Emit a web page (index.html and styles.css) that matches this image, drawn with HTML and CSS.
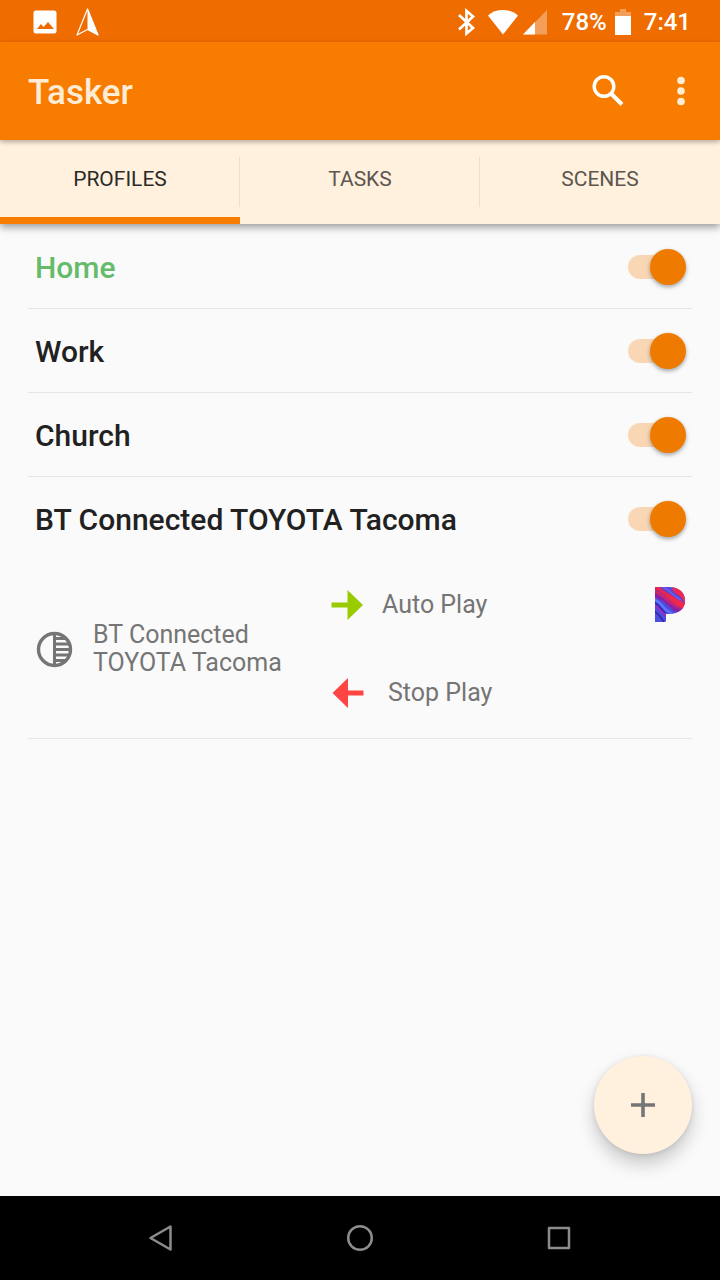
FILE: index.html
```html
<!DOCTYPE html>
<html lang="en">
<head>
<meta charset="utf-8">
<meta name="viewport" content="width=device-width, initial-scale=1">
<title>Tasker</title>
<link rel="stylesheet" href="styles.css">
</head>
<body>
<div class="screen">
  <div class="status-bar">
    <div class="status-left">
      <svg width="24" height="24" viewBox="0 0 24 24" aria-hidden="true"><path fill="#fff" fill-rule="evenodd" d="M3 .5h18a2.500 2.500 0 0 1 2.500 2.500v18a2.500 2.500 0 0 1-2.500 2.500H3A2.500 2.500 0 0 1 .5 21V3A2.500 2.500 0 0 1 3 .5zM4 19h17l-6-7-4.500 5L8 14z"/></svg>
      <svg width="24" height="30" viewBox="0 0 24 30" aria-hidden="true"><path fill="none" stroke="#fff" stroke-width="1.200" stroke-linejoin="round" d="M11.500 2L1 28L11.500 22.500L22 28z"/><path fill="#fff" d="M11.500 1v21.500l11 6z"/></svg>
    </div>
    <div class="status-right">
      <svg width="20" height="28" viewBox="0 0 20 28" aria-hidden="true"><path fill="none" stroke="#fff" stroke-width="2.700" d="M2 7l14 13-6.500 5.500V3L16 8.500 2 21.500"/></svg>
      <svg class="wifi" width="32" height="26" viewBox="0 0 32 26" aria-hidden="true"><path fill="#fff" d="M15 25.500L0 6.500C8-.8 22-.8 30 6.500z"/></svg>
      <svg class="signal" width="24" height="26" viewBox="0 0 24 26" aria-hidden="true"><path fill="#fff" fill-opacity=".35" d="M24 1v24.500H0z"/><path fill="#fff" d="M12 13v12.500H0z"/></svg>
      <span class="percent">78%</span>
      <svg class="battery" width="16" height="28" viewBox="0 0 16 28" aria-hidden="true"><path fill="#fff" fill-opacity=".35" d="M5 1h6v3h5v2H0V4h5zM0 6h16v4H0z"/><path fill="#fff" d="M0 8h16v19H0z"/></svg>
      <span class="clock">7:41</span>
    </div>
  </div>
  <header class="app-bar">
    <h1 class="app-title">Tasker</h1>
    <button class="icon-button search" aria-label="Search"><svg width="34" height="34" viewBox="0 0 34 34"><circle cx="13" cy="12.500" r="9.800" fill="none" stroke="#fff" stroke-width="3.400"/><path d="M20 19.500l11 11" stroke="#fff" stroke-width="4"/></svg></button>
    <button class="icon-button" aria-label="More options"><svg width="10" height="34" viewBox="0 0 10 34" fill="#ffecd6"><circle cx="5" cy="6.500" r="3.800"/><circle cx="5" cy="17" r="3.800"/><circle cx="5" cy="27.500" r="3.800"/></svg></button>
  </header>
  <nav class="tabs">
    <button class="tab tab-active">PROFILES</button>
    <button class="tab">TASKS</button>
    <button class="tab">SCENES</button>
  </nav>
  <main class="profiles">
    <section class="profile">
      <div class="profile-head"><label class="name name-on" for="home">Home</label><input class="switch" id="home" type="checkbox" role="switch" checked></div>
    </section>
    <section class="profile">
      <div class="profile-head"><label class="name" for="work">Work</label><input class="switch" id="work" type="checkbox" role="switch" checked></div>
    </section>
    <section class="profile">
      <div class="profile-head"><label class="name" for="church">Church</label><input class="switch" id="church" type="checkbox" role="switch" checked></div>
    </section>
    <section class="profile">
      <div class="profile-head"><label class="name" for="tacoma">BT Connected TOYOTA Tacoma</label><input class="switch" id="tacoma" type="checkbox" role="switch" checked></div>
      <div class="details">
        <div class="context">
          <svg width="38" height="38" viewBox="0 0 38 38" aria-hidden="true"><circle cx="19.500" cy="19.500" r="16" fill="none" stroke="#757575" stroke-width="3.400"/><path stroke="#757575" stroke-width="3" d="M19.500 3v33"/><path stroke="#757575" stroke-width="3.200" d="M20 8.500h10M20 14h14M20 19.500h15M20 25h14M20 30.500h10"/></svg>
          <span>BT Connected TOYOTA Tacoma</span>
        </div>
        <div class="actions">
          <div class="action">
            <svg width="34" height="34" viewBox="0 0 34 34" aria-hidden="true"><path fill="#9c0" d="M1.500 14.500h16V2L33 17 17.500 32V19.500h-16z"/></svg>
            <span>Auto Play</span>
            <svg class="app-logo" width="32" height="36" viewBox="0 0 32 36" role="img" aria-label="Pandora">
              <defs><clipPath id="p"><path d="M1 0h14c10 0 16 5.500 16 13.500S25 27 15 27h-3v6.500q0 1.500-1.500 1.500H1z"/></clipPath></defs>
              <g clip-path="url(#p)">
                <path fill="#4a4fe0" d="M0 0h32v36H0z"/>
                <path fill="#8a22a8" d="M0 0h6l26 22v8L20 24 10 15 0 10z"/>
                <path fill="#e3264f" d="M0 5l7 4 8 7 8 5 9 3v-8l-10-5-9-6-6-5H0z"/>
                <path fill="#f02850" d="M18 0h6l8 8v14l-8-3-7-7-4-2 8-1z"/>
                <path fill="#6a3fd0" d="M6 0h8l6 5 7 5 4 6-8-4-7-5-6-3z"/>
                <path fill="none" stroke="#5d6cf0" stroke-width="1.300" d="M9 0l6 4 6 5 6 4"/>
                <path fill="none" stroke="#5f78ff" stroke-width="2.200" d="M0 12l6 4 5 6 7 5"/>
                <path fill="none" stroke="#3a25a8" stroke-width="1.600" d="M0 15l5 4 6 7M0 24l5 4 5 7"/>
                <path fill="none" stroke="#9430c0" stroke-width="2" d="M0 18l5 4 7 7"/>
                <path fill="none" stroke="#a02a9c" stroke-width="1.300" d="M0 2l8 5 7 7 8 6 7 3"/>
              </g>
            </svg>
          </div>
          <div class="action action-exit">
            <svg width="34" height="34" viewBox="0 0 34 34" aria-hidden="true"><path fill="#f44" d="M33.500 14.500H18V2L2.500 17 18 32V19.500h15.500z"/></svg>
            <span>Stop Play</span>
          </div>
        </div>
      </div>
    </section>
    <button class="fab" aria-label="Add profile"><svg width="28" height="28" viewBox="0 0 28 28"><path stroke="#757575" stroke-width="3.600" d="M14 2v24M2 14h24"/></svg></button>
  </main>
  <div class="nav-bar">
    <button class="nav-button" aria-label="Back"><svg width="28" height="28" viewBox="0 0 28 28"><path fill="none" stroke="#8c8c8c" stroke-width="2.500" stroke-linejoin="round" d="M23.500 2.500v23L3.500 14z"/></svg></button>
    <button class="nav-button" aria-label="Home"><svg width="28" height="28" viewBox="0 0 28 28"><circle cx="14" cy="14" r="11.800" fill="none" stroke="#8c8c8c" stroke-width="2.500"/></svg></button>
    <button class="nav-button" aria-label="Recent apps"><svg width="28" height="28" viewBox="0 0 28 28"><path fill="none" stroke="#8c8c8c" stroke-width="2.500" stroke-linejoin="round" d="M4 4h20v20H4z"/></svg></button>
  </div>
</div>
</body>
</html>
```

FILE: styles.css
```css
* { box-sizing: border-box; }

body {
  margin: 0;
  background: #fafafa;
  font-family: Roboto, "Liberation Sans", sans-serif;
}

button {
  border: 0;
  padding: 0;
  background: none;
  font: inherit;
  color: inherit;
  cursor: pointer;
}

svg { display: block; flex: none; }

.screen {
  display: flex;
  flex-direction: column;
  min-height: 100vh;
}

.status-bar {
  display: flex;
  align-items: center;
  justify-content: space-between;
  height: 42px;
  padding: 1px 29px 0 33px;
  background: #ef6c00;
  color: #fff;
  font-size: 24px;
  font-weight: 500;
}

.status-left, .status-right { display: flex; align-items: center; }
.status-left { gap: 19px; }
.wifi { margin-left: 11px; }
.signal { margin-left: 3px; }
.percent { margin-left: 15px; }
.battery { margin-left: 8px; }
.clock { margin-left: 13px; }

.app-bar {
  position: relative;
  z-index: 2;
  display: flex;
  align-items: center;
  height: 98px;
  padding: 0 34px 0 28px;
  background: #f77c00;
  box-shadow: 0 2px 5px rgba(0, 0, 0, .3);
}

.app-title {
  flex: 1;
  margin: 0;
  padding-top: 2px;
  color: #ffecd6;
  font-size: 35px;
  font-weight: 500;
}

.search { margin-right: 51px; }

.tabs {
  position: relative;
  z-index: 1;
  display: grid;
  grid-template-columns: repeat(3, 1fr);
  height: 84px;
  background: #fff1de;
  box-shadow: 0 3px 8px rgba(0, 0, 0, .4);
}

.tab {
  padding-top: 1px;
  border-bottom: 7px solid transparent;
  background: linear-gradient(#ecdfce, #ecdfce) right 17px / 1px 50px no-repeat;
  color: #5c564f;
  font-size: 21px;
}

.tab:last-child { background: none; }

.tab-active { border-bottom-color: #f77c00; color: #2d2a27; }

.profiles {
  position: relative;
  flex: 1;
  padding: 1px 28px 0;
}

.profile { border-bottom: 1px solid #e6e6e6; }

.profile-head {
  display: flex;
  align-items: center;
  justify-content: space-between;
  height: 83px;
  padding: 0 6px 0 7px;
}

.name { padding-top: 1px; color: #212121; font-size: 30px; font-weight: 500; }
.name-on { color: #66bb6a; }

.switch {
  appearance: none;
  position: relative;
  width: 58px;
  height: 36px;
  margin: 0;
  cursor: pointer;
}

.switch::before {
  content: "";
  position: absolute;
  inset: 6px 6px 6px 0;
  border-radius: 12px;
  background: #f9d7b5;
}

.switch::after {
  content: "";
  position: absolute;
  top: 0;
  left: 0;
  width: 36px;
  height: 36px;
  border-radius: 50%;
  background: #ef7a00;
  box-shadow: 0 2px 4px rgba(0, 0, 0, .35);
}

.switch:checked::after { left: auto; right: 0; }

.details {
  display: grid;
  grid-template-columns: 295px 1fr;
  align-items: center;
  padding: 1px 6px 1px 7px;
  color: #757575;
  font-size: 25px;
  line-height: 28px;
}

.context {
  display: flex;
  align-items: center;
  gap: 20px;
  padding-right: 40px;
}

.action {
  display: flex;
  align-items: center;
  height: 88px;
  gap: 18px;
}

.action-exit { gap: 24px; }
.app-logo { margin-left: auto; }

.fab {
  position: absolute;
  right: 28px;
  bottom: 42px;
  display: grid;
  place-items: center;
  width: 98px;
  height: 98px;
  border-radius: 50%;
  background: #fff1de;
  box-shadow: 0 10px 18px rgba(0, 0, 0, .2), 0 1px 5px rgba(0, 0, 0, .1);
}

.nav-bar {
  display: flex;
  align-items: center;
  justify-content: center;
  gap: 171px;
  height: 84px;
  background: #000;
}
```
